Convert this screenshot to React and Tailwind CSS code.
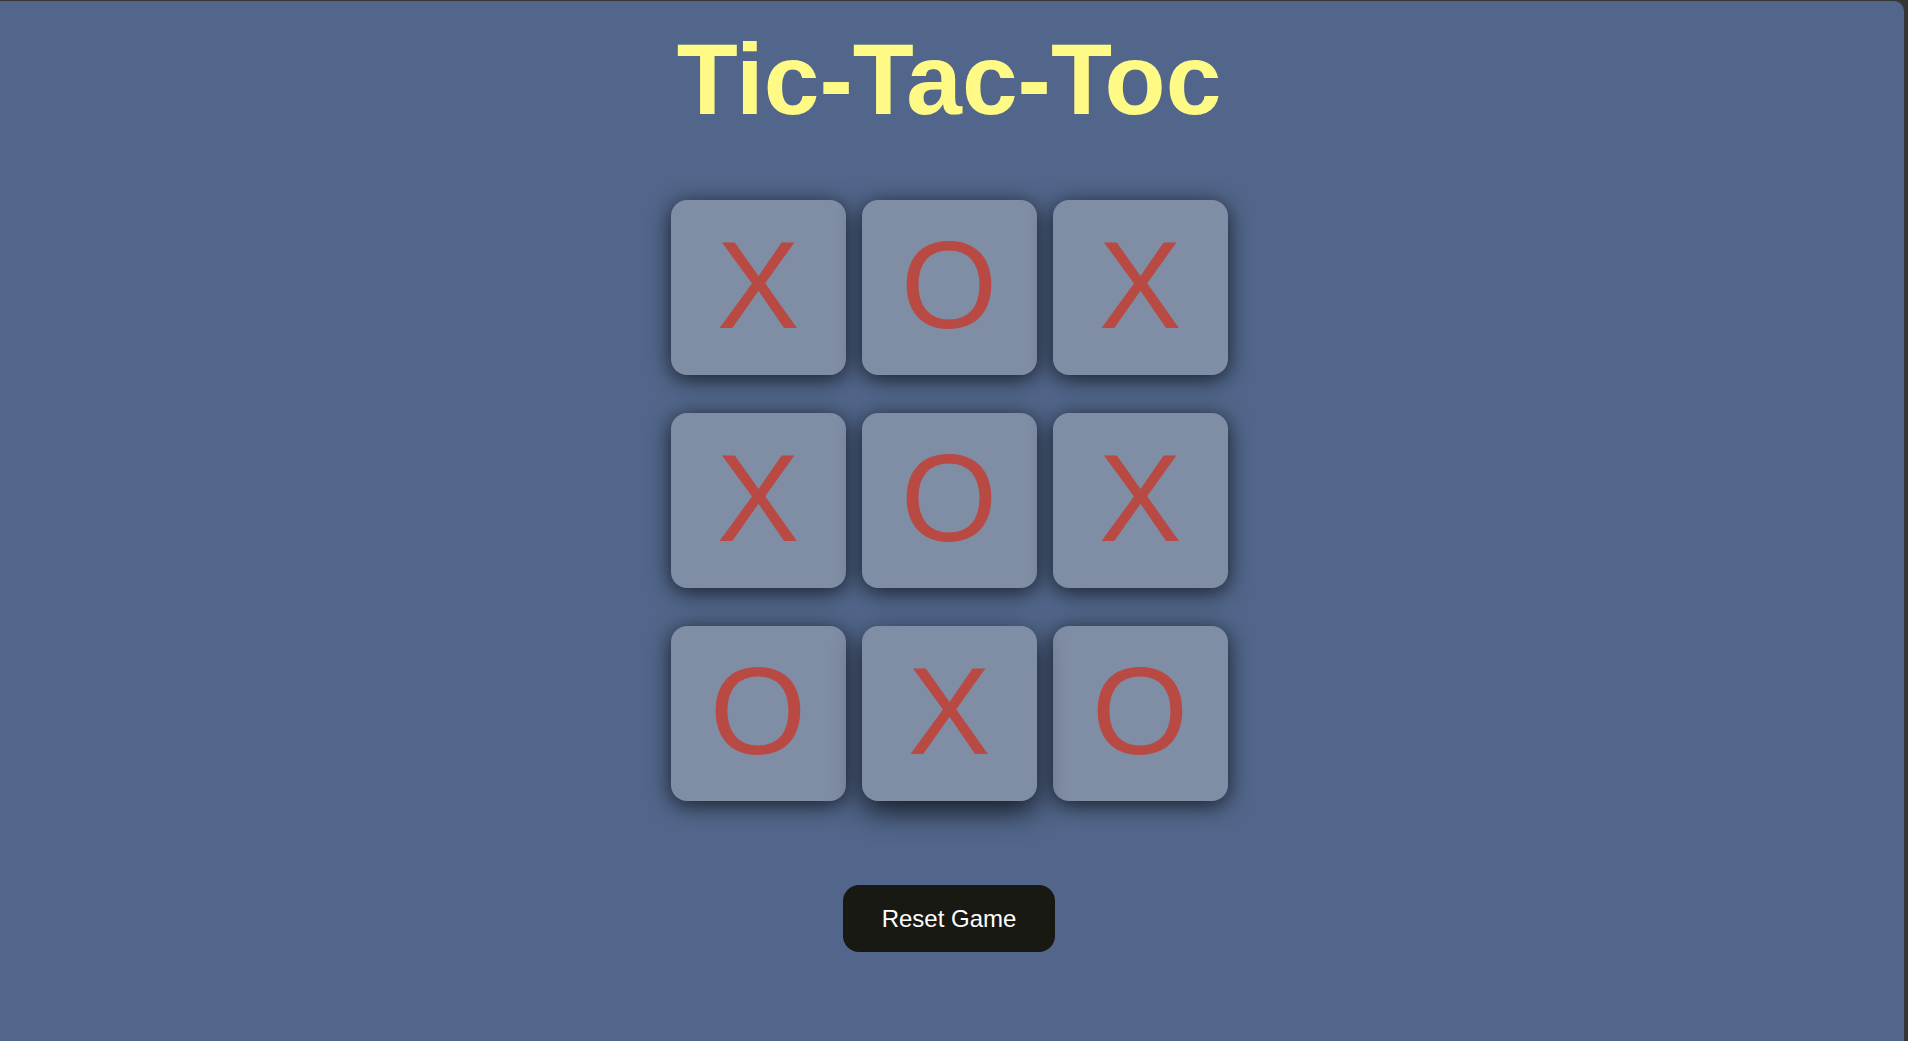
import { useState } from "react";

const start = ["X", "O", "X", "X", "O", "X", "O", "X", "O"];

export default function App() {
  const [board, setBoard] = useState(start);

  const resetGame = () => setBoard(Array(9).fill(""));

  return (
    <div className="h-screen overflow-hidden bg-[#363636] pt-px pr-[4px]">
      <div className="h-full bg-[#51668a] rounded-tr-[10px] flex flex-col items-center pr-[6px] font-['Liberation_Sans',Arial,sans-serif]">
        <h1 className="mt-[28px] text-[100px] leading-none font-bold text-[#fffa86]">
          Tic-Tac-Toc
        </h1>

        <div className="mt-[71px] grid grid-cols-[repeat(3,175px)] gap-x-[16px] gap-y-[38px]">
          {board.map((cell, i) => (
            <div
              key={i}
              className={
                i === 7
                  ? "relative z-10 h-[175px] pb-[5px] rounded-2xl bg-[#7f8da5] flex items-center justify-center text-[124px] leading-none text-[#b94a43] shadow-[0_10px_28px_rgba(0,0,0,0.75)]"
                  : "h-[175px] pb-[5px] rounded-2xl bg-[#7f8da5] flex items-center justify-center text-[124px] leading-none text-[#b94a43] shadow-[0_4px_22px_rgba(0,0,0,0.72)]"
              }
            >
              {cell}
            </div>
          ))}
        </div>

        <button
          onClick={resetGame}
          className="mt-[84px] h-[67px] px-[39px] rounded-2xl bg-[#191913] text-white text-[24px]"
        >
          Reset Game
        </button>
      </div>
    </div>
  );
}
